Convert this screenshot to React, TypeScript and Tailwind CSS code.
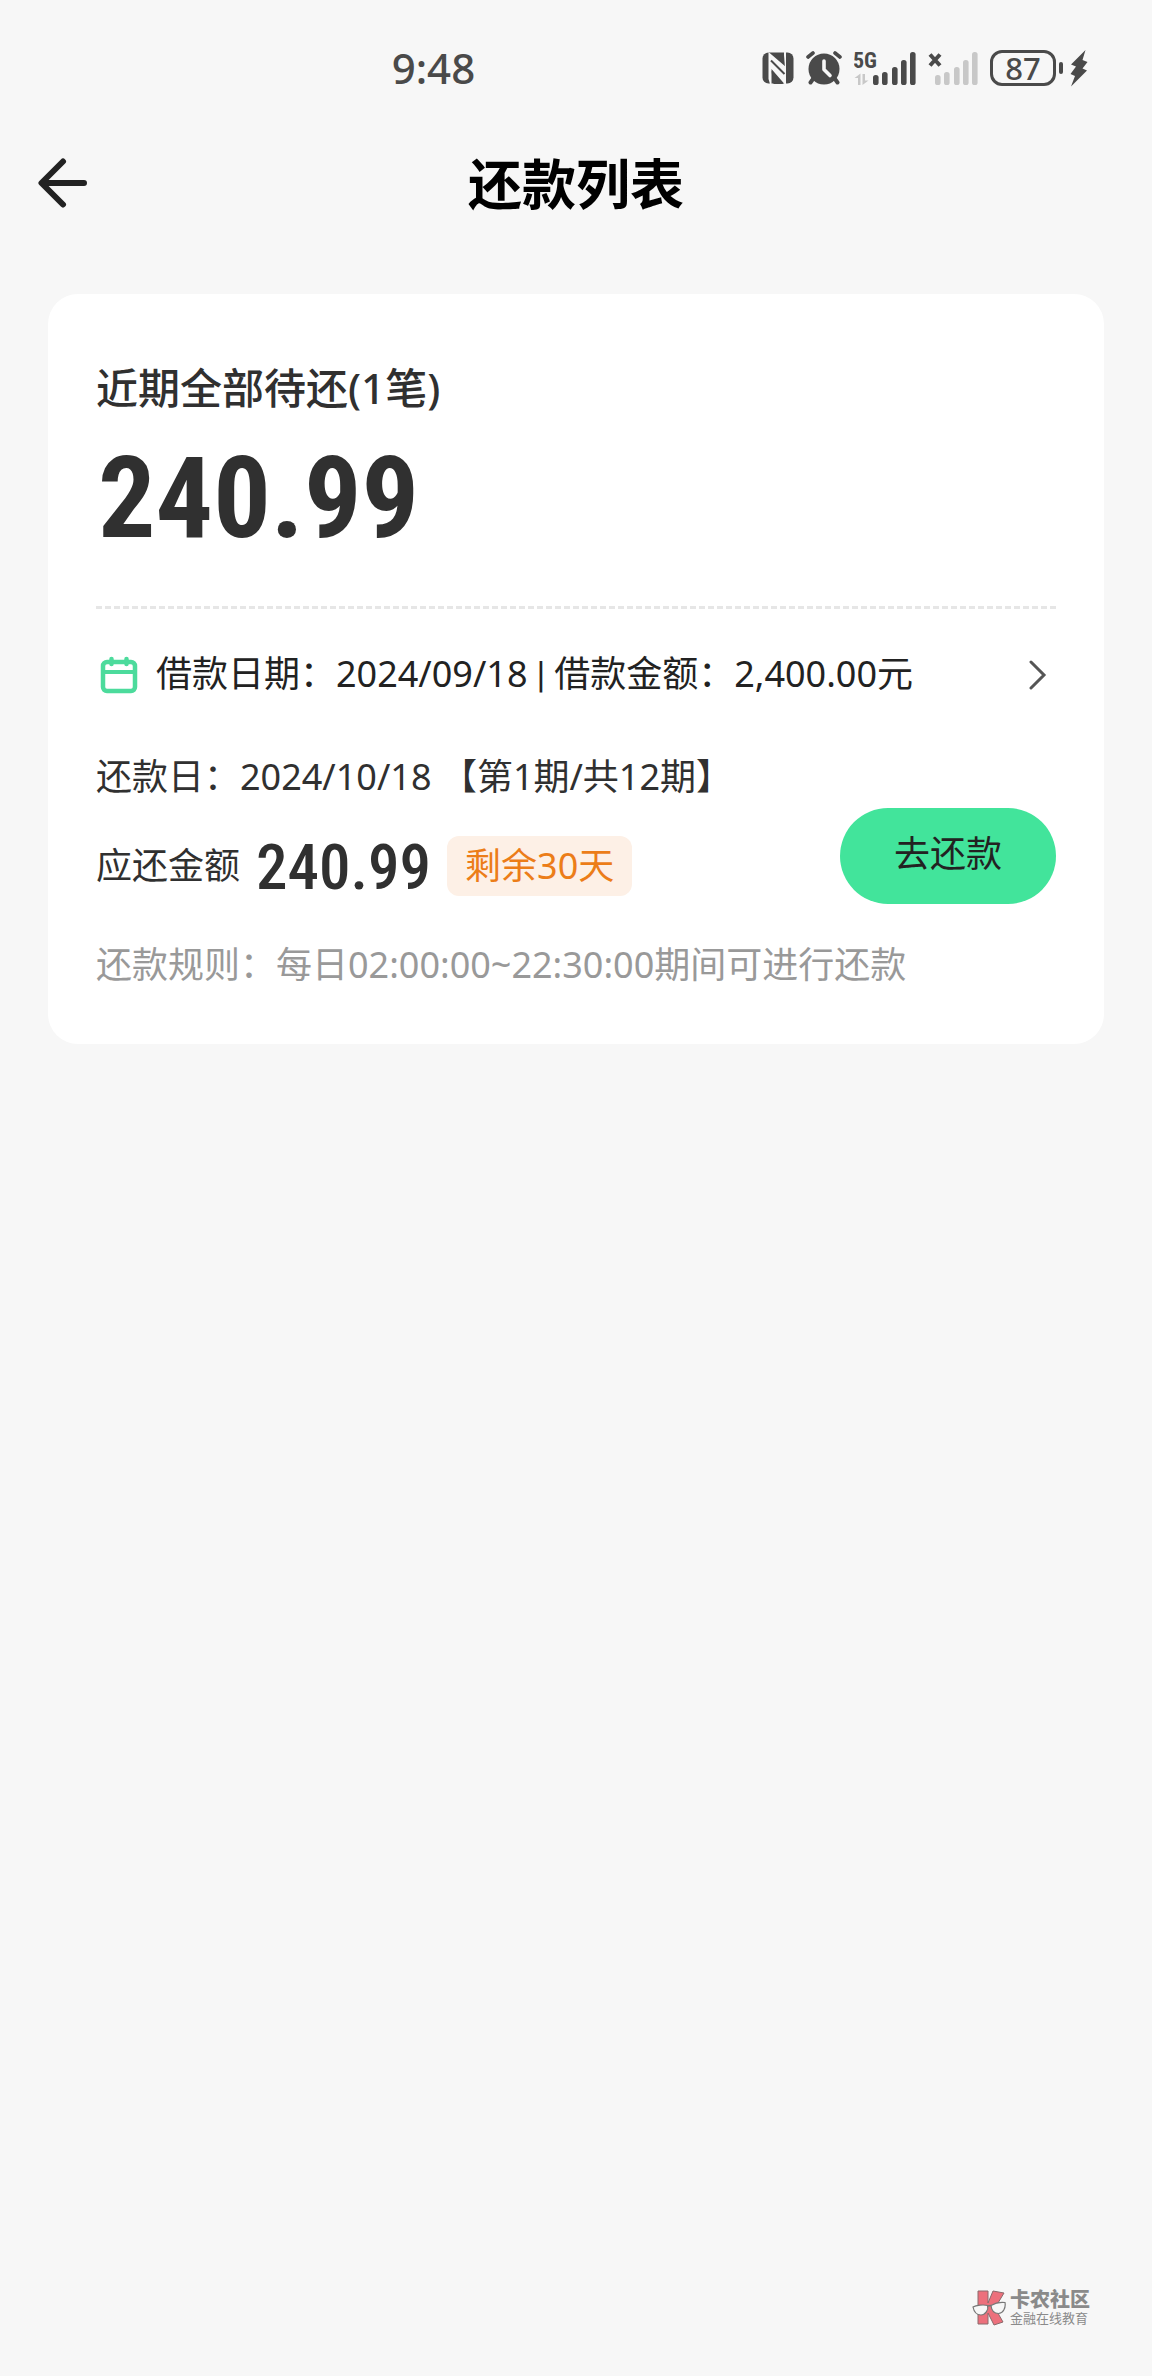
const signalBars = [
  { x: 0, h: 10 },
  { x: 9, h: 13 },
  { x: 19, h: 18 },
  { x: 28, h: 25 },
  { x: 37, h: 33 },
];

function NfcIcon() {
  return (
    <svg width="32" height="32" viewBox="0 0 32 32" fill="none">
      <rect x="0.5" y="0.5" width="31" height="31" rx="6" fill="#4a4a4a" />
      <path d="M6.500 0L24 15V32H22.500L9.500 17V32H8L6.500 27Z" fill="#f7f7f7" />
      <path d="M22 0H24V16H23L22 3Z" fill="#f7f7f7" />
      <path d="M9 8.500L22.500 22" stroke="#4a4a4a" strokeWidth="2" />
      <path d="M9.500 19L21.500 32H11.500Z" fill="#4a4a4a" />
    </svg>
  );
}

function AlarmIcon() {
  return (
    <svg width="36" height="34" viewBox="0 0 36 34" fill="none" stroke="#4a4a4a" strokeLinecap="round">
      <circle cx="18" cy="18" r="15.5" fill="#4a4a4a" stroke="none" />
      <path d="M2 6L7 2M34 6L29 2" strokeWidth="3.6" />
      <path d="M7 28L4.500 31.500M29 28L31.500 31.500" strokeWidth="4" />
      <path d="M18 10V18.500L24 24.500" stroke="#f7f7f7" strokeWidth="3.600" strokeLinejoin="round" />
    </svg>
  );
}

function Signal({ color }: { color: string }) {
  return (
    <g fill={color}>
      {signalBars.map((b) => (
        <rect key={b.x} x={b.x} y={34 - b.h} width="5.6" height={b.h} rx="2.6" />
      ))}
    </g>
  );
}

function StatusBar() {
  return (
    <div className="flex h-34 items-center justify-between pl-[34%] pr-16 text-[#4a4a4a]">
      <span className="text-[42px] leading-none font-medium">9:48</span>
      <div className="flex items-center gap-3">
        <NfcIcon />
        <AlarmIcon />
        {/* 主卡 5G 信号 */}
        <svg width="62" height="50" viewBox="0 -8 62 50">
          <text x="-1" y="17" fontSize="22" fontWeight="700" fill="#4a4a4a" fontFamily="Roboto Condensed, sans-serif">5G</text>
          <path d="M4 34V27H0.500L6.500 22.500V34ZM8.500 23V34L14.500 29.500H11V23Z" fill="#c8c8c8" />
          <g transform="translate(19 0)">
            <Signal color="#4a4a4a" />
          </g>
        </svg>
        {/* 副卡无信号 */}
        <svg width="50" height="34" viewBox="0 0 50 34">
          <path d="M2 3.500L12 14.500M12 3.500L2 14.500" stroke="#4a4a4a" strokeWidth="4" />
          <g transform="translate(7 0)">
            <Signal color="#c8c8c8" />
          </g>
        </svg>
        <div className="flex items-center gap-[3px]">
          <span className="flex h-9 w-[66px] items-center justify-center rounded-xl border-3 border-[#4a4a4a] text-[31px] leading-none font-medium">
            87
          </span>
          <span className="h-3 w-1 rounded-full bg-[#4a4a4a]" />
          <svg className="ml-1" width="18" height="37" viewBox="0 0 18 37" fill="#4a4a4a">
            <path d="M15.500 0L1 14.500L6 16.500L0.500 24L5 26L1 36.500L17 20.500L12.500 18.500L17.500 12L12.500 10Z" />
          </svg>
        </div>
      </div>
    </div>
  );
}

function CalendarIcon() {
  return (
    <svg width="38" height="38" viewBox="0 0 38 38" fill="none" stroke="#4cdb9c" strokeWidth="4.500">
      <rect x="3" y="6" width="32" height="29" rx="4" />
      <path d="M3 16H35" strokeWidth="4" />
      <path d="M11.500 3V8M26.500 3V8" strokeLinecap="round" />
    </svg>
  );
}

function Watermark() {
  return (
    <footer className="mt-auto flex items-center justify-end gap-1 pr-[62px] pb-[50px]">
      <svg width="34" height="36" viewBox="0 0 34 36">
        <path d="M6 1H16V13L21 1L32 3L23 18L31 32L22 35L16 23V34H6Z" fill="#ec707c" stroke="#8a6a6c" strokeWidth="1" />
        <path d="M1 17C4 15 12 14.500 15.500 15.500C17 20 13 25 9 25C4 25 2 22 1 17Z" fill="#f7f7f7" stroke="#777" strokeWidth="1.200" />
        <path d="M19 15.500C23 13 29 12 33 12.500C34 18 31 23.500 26.500 23.500C22 23.500 19.500 20 19 15.500Z" fill="#f7f7f7" stroke="#777" strokeWidth="1.200" />
        <path d="M15.500 16L19 15.500" stroke="#777" strokeWidth="1.500" />
      </svg>
      <div className="text-[#8a8a8a]">
        <p className="text-[20px] leading-5 font-black">卡农社区</p>
        <p className="text-[13px] leading-4">金融在线教育</p>
      </div>
    </footer>
  );
}

export default function App() {
  return (
    <div className="flex min-h-screen flex-col bg-[#f7f7f7] font-['Noto_Sans','Noto_Sans_CJK_SC',sans-serif]">
      <StatusBar />

      {/* 标题栏 */}
      <header className="grid h-24 grid-cols-[1fr_auto_1fr] items-center px-9">
        <button type="button" aria-label="返回" className="justify-self-start">
          <svg width="52" height="52" viewBox="0 0 52 52" fill="none" stroke="#222" strokeWidth="6" strokeLinecap="round" strokeLinejoin="round">
            <path d="M48 25H6M27 3.500L5.500 25L27 46.500" />
          </svg>
        </button>
        <h1 className="text-[54px] leading-none font-bold text-black">还款列表</h1>
      </header>

      {/* 还款卡片 */}
      <main className="mx-12 mt-[62px] rounded-[30px] bg-white px-12 pt-16 pb-12 text-[36px] text-[#303030]">
        <h2 className="text-[42px] leading-[60px] font-medium">近期全部待还(1笔)</h2>
        <p className="mt-5 pl-[2px] font-['Roboto_Condensed',sans-serif] text-[114px] leading-[120px] font-bold">240.99</p>
        <hr className="mt-12 border-t-3 border-dashed border-[#e6e6e6]" />

        <a href="#detail" className="mt-[38px] flex items-center leading-[54px] text-[#222]">
          <span className="pl-1">
            <CalendarIcon />
          </span>
          <span className="ml-[18px]">
            借款日期：2024/09/18<span className="font-['Roboto']"> | </span>借款金额：2,400.00元
          </span>
          <svg className="mr-2 ml-auto" width="20" height="30" viewBox="0 0 20 30" fill="none" stroke="#555" strokeWidth="3" strokeLinecap="round">
            <path d="M3 2L16 15L3 28" />
          </svg>
        </a>

        <div className="mt-12 flex items-end justify-between">
          <div className="pb-2">
            <p className="leading-[54px]">还款日：2024/10/18 【第1期/共12期】</p>
            <div className="mt-8 flex h-[60px] items-center gap-4">
              <span>应还金额</span>
              <span className="pt-1 font-['Roboto_Condensed',sans-serif] text-[63px] leading-[60px] font-medium">240.99</span>
              <span className="rounded-xl bg-[#fdf0e6] px-[18px] leading-[60px] text-[#ec7d18]">剩余30天</span>
            </div>
          </div>
          <button type="button" className="h-24 rounded-full bg-[#42e49b] px-[54px] pb-1 text-[#222]">
            去还款
          </button>
        </div>

        <p className="mt-[34px] pb-1 leading-[54px] text-[#999]">还款规则：每日02:00:00~22:30:00期间可进行还款</p>
      </main>

      <Watermark />
    </div>
  );
}
